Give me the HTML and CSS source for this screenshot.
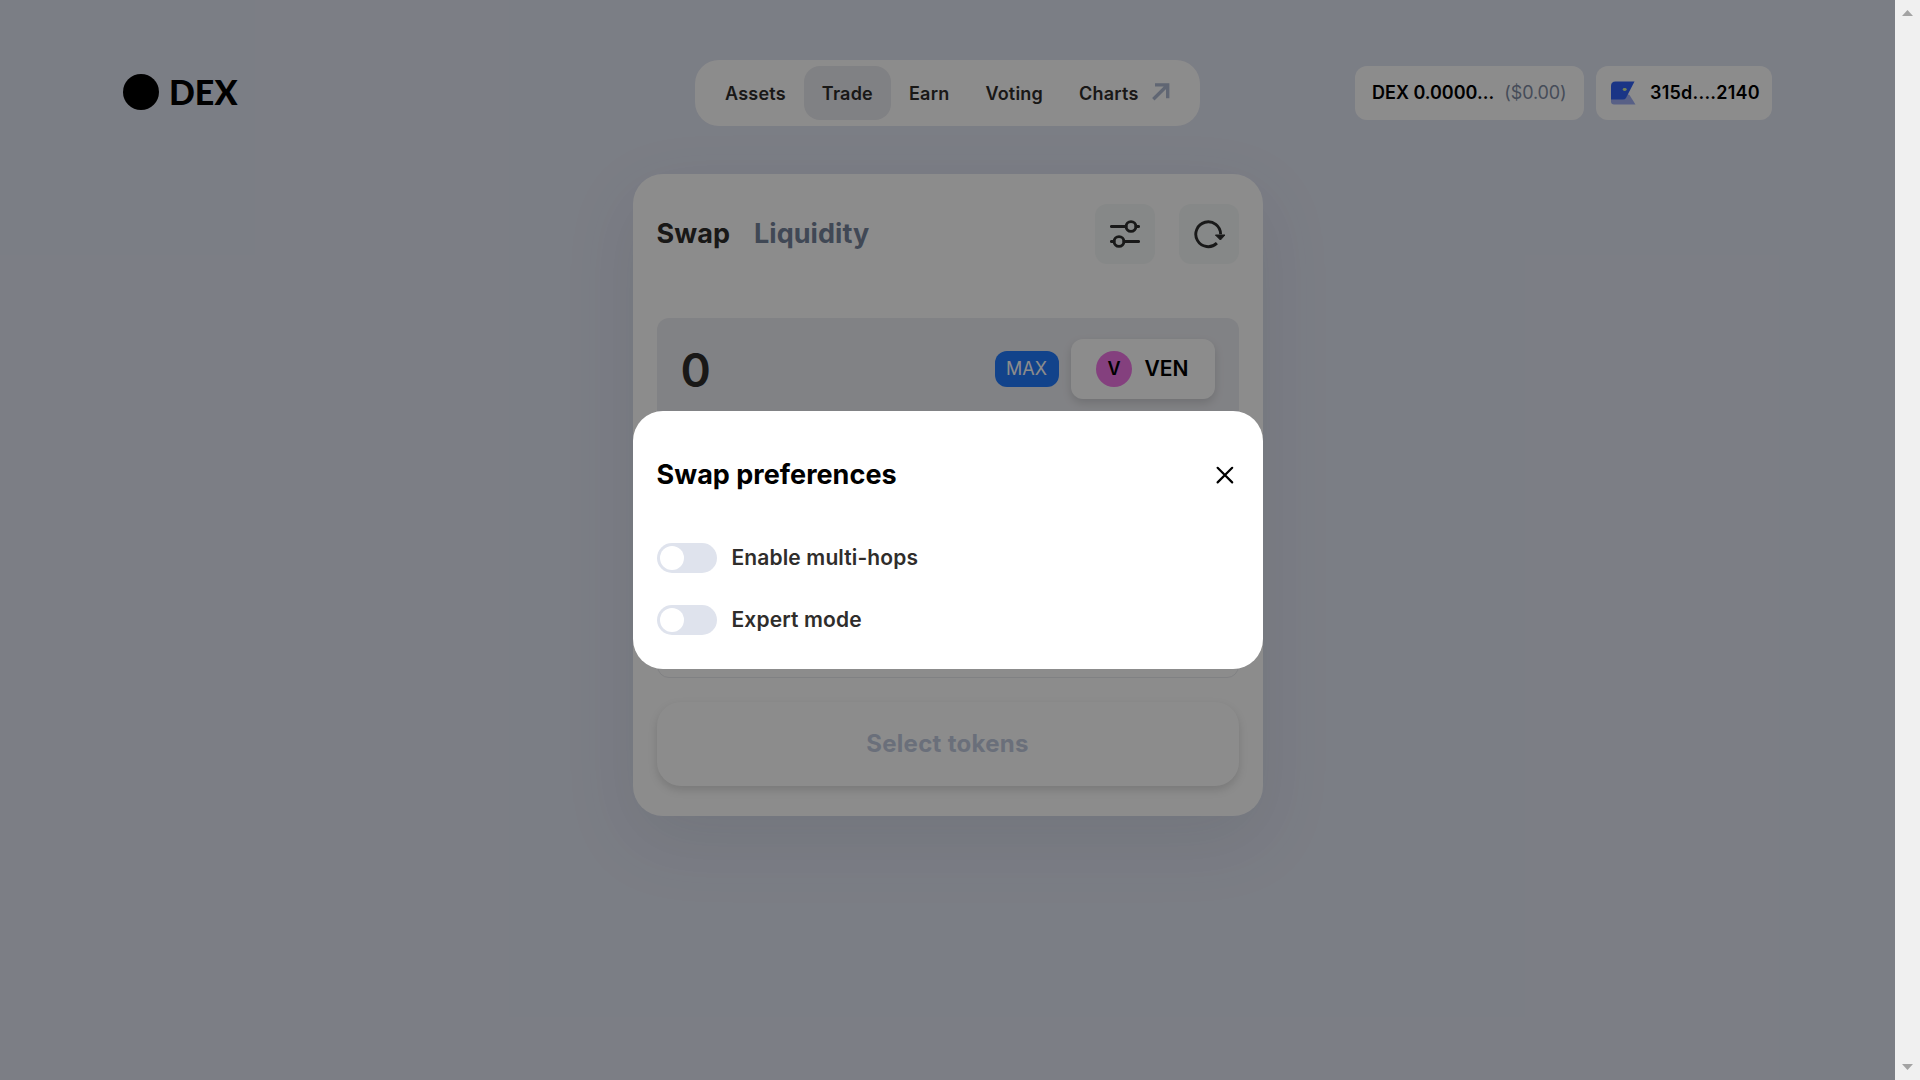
FILE: index.html
```html
<!DOCTYPE html>
<html lang="en">
<head>
<meta charset="utf-8">
<title>DEX</title>
<link rel="stylesheet" href="styles.css">
</head>
<body>
<div class="page">
  <header class="header">
    <div class="brand"><span class="brand-dot"></span><span class="brand-name">DEX</span></div>
    <nav class="nav">
      <a class="nav-item">Assets</a>
      <a class="nav-item active">Trade</a>
      <a class="nav-item">Earn</a>
      <a class="nav-item">Voting</a>
      <a class="nav-item">Charts
        <svg class="nav-arrow" width="18" height="18" viewBox="0 0 18 18" fill="none" stroke="#afbbd2" stroke-width="3.4"><path d="M3 1.9H15.7V15.2M15.2 2.5L1.3 16.2"/></svg>
      </a>
    </nav>
    <div class="account">
      <div class="chip balance"><span>DEX 0.0000...</span><span class="usd">($0.00)</span></div>
      <div class="chip wallet">
        <svg width="26" height="24" viewBox="0 0 26 24"><path d="M1 7V20.5Q1 23.5 4 23.5H25.5L19.5 14Z" fill="#a0b0f5"/><path d="M5.5.5H24.5L16 17Q15 18.5 13 18.5H1V5Q1 .5 5.5.5Z" fill="#3162f5"/><ellipse cx="14.7" cy="8.5" rx="2" ry="1.4" fill="#d8ef9c"/></svg>
        <span>315d....2140</span>
      </div>
    </div>
  </header>
  <main class="card">
    <div class="card-head">
      <div class="tabs"><span class="tab">Swap</span><span class="tab muted">Liquidity</span></div>
      <div class="tools">
        <button class="tool"><svg width="30" height="30" viewBox="0 0 30 30" fill="none" stroke="#2f2f2f" stroke-width="2.9" stroke-linecap="round"><path d="M1.4 7.5H16M26 7.5H28.6M1.4 22.5H4M14 22.5H28.6"/><circle cx="21" cy="7.5" r="4.9"/><circle cx="9" cy="22.5" r="4.9"/></svg></button>
        <button class="tool"><svg width="32" height="30" viewBox="0 0 32 30" fill="none" stroke="#2f2f2f" stroke-width="2.9"><path d="M23.9 24.1A12.4 12.4 0 1 1 27.6 15.3"/><path d="M22.4 16H32L27.4 21Z" fill="#2f2f2f" stroke-width="1" stroke-linejoin="round"/></svg></button>
      </div>
    </div>
    <section class="amount">
      <span class="amount-value">0</span>
      <button class="max">MAX</button>
      <button class="token"><span class="token-logo">V</span>VEN</button>
    </section>
    <section class="receive"></section>
    <button class="submit">Select tokens</button>
  </main>
</div>
<div class="overlay">
  <div class="dialog">
    <div class="dialog-head">
      <h2 class="dialog-title">Swap preferences</h2>
      <svg class="close" width="18" height="18" viewBox="0 0 18 18" stroke="#000" stroke-width="2.2" stroke-linecap="round"><path d="M1.6 1.8L16.2 16.4M16.2 1.8L1.6 16.4"/></svg>
    </div>
    <label class="option"><span class="switch"><span class="knob"></span></span><span class="option-name">Enable multi-hops</span></label>
    <label class="option"><span class="switch"><span class="knob"></span></span><span class="option-name">Expert mode</span></label>
  </div>
</div>
<div class="scrollbar">
  <svg width="11" height="6" viewBox="0 0 11 6"><path d="M0 6L5.5 0L11 6Z" fill="#a3a3a3"/></svg>
  <svg width="11" height="6" viewBox="0 0 11 6"><path d="M0 0H11L5.5 6Z" fill="#a3a3a3"/></svg>
</div>
</body>
</html>
```
FILE: styles.css
```css
* { box-sizing: border-box; }
body { margin: 0; height: 1080px; overflow: hidden; display: flex; font-family: Inter, "Liberation Sans", sans-serif; color: #2f2d2b; background: #e1e5f2; }
button { border: 0; padding: 0; font: inherit; color: inherit; }
svg { display: block; flex: none; }

.page { width: 1895px; height: 1080px; display: flex; flex-direction: column; align-items: center; overflow: hidden; }
.header { width: 1649px; margin-top: 60px; height: 66px; display: grid; grid-template-columns: 1fr 505px 1fr; align-items: center; }
.brand { display: flex; align-items: center; gap: 10px; padding-bottom: 2px; }
.brand-dot { width: 36px; height: 36px; border-radius: 50%; background: #000; }
.brand-name { font: 900 34px/37px Lato, sans-serif; color: #000; padding-bottom: 1px; }
.nav { height: 66px; padding: 6px 12px; display: flex; background: #fff; border-radius: 24px; }
.nav-item { height: 54px; padding: 0 18px; display: flex; align-items: center; font-size: 18px; font-weight: 630; letter-spacing: .22px; border-radius: 16px; white-space: nowrap; }
.nav-item.active { background: #eaebf0; }
.nav-arrow { margin: -2px 0 0 13px; }
.account { display: flex; justify-content: flex-end; gap: 12px; }
.chip { height: 54px; display: flex; align-items: center; background: #fff; border-radius: 12px; font-size: 18px; font-weight: 600; color: #000; white-space: nowrap; padding-bottom: 1px; }
.balance { width: 229px; padding-left: 17px; gap: 10px; }
.usd { font-weight: 400; color: #7f8ba3; letter-spacing: -.1px; }
.wallet { width: 176px; padding-left: 14px; gap: 14px; letter-spacing: .22px; }

.card { width: 630px; height: 642px; margin-top: 48px; padding: 30px 24px; border-radius: 30px; background: #fff; display: flex; flex-direction: column; box-shadow: 0 24px 72px rgba(75, 85, 110, .11); }
.card-head { height: 60px; display: flex; align-items: center; justify-content: space-between; }
.tabs { display: flex; gap: 24px; font-size: 27px; font-weight: 690; letter-spacing: .05px; padding-bottom: 2px; }
.muted { color: #76839b; }
.tools { display: flex; gap: 24px; }
.tool { width: 60px; height: 60px; display: grid; place-items: center; border-radius: 12px; background: #f4f8f7; }
.amount { height: 150px; margin-top: 54px; padding: 21px 24px; display: flex; align-items: flex-start; background: #ecedf2; border-radius: 12px; }
.amount-value { flex: 1; font-size: 46px; line-height: 62px; font-weight: 560; }
.max { width: 64px; height: 36px; margin: 12px 12px 0 0; border-radius: 12px; background: #217afd; color: #fff; font-size: 18px; padding-bottom: 1px; }
.token { width: 144px; height: 60px; padding: 0 0 1px 25px; display: flex; align-items: center; gap: 13px; border-radius: 12px; background: #fff; color: #000; font-size: 21px; font-weight: 600; box-shadow: 0 4px 10px rgba(0, 0, 0, .14); }
.token-logo { width: 36px; height: 36px; border-radius: 50%; background: #f075e6; display: grid; place-items: center; font-size: 18px; font-weight: 630; padding-left: 1px; }
.receive { height: 150px; margin-top: 60px; border: 1px solid #eaebef; border-radius: 12px; }
.submit { height: 84px; margin-top: 24px; padding-bottom: 2px; border-radius: 24px; background: #fff; color: #c2cbdf; font-size: 24px; font-weight: 700; letter-spacing: .3px; box-shadow: 0 4px 10px rgba(0, 0, 0, .14); }

.overlay { position: absolute; inset: 0 25px 0 0; display: flex; align-items: center; justify-content: center; background: rgba(0, 0, 0, .45); }
.dialog { width: 630px; height: 258px; padding: 42px 24px 0; border-radius: 30px; background: #fff; }
.dialog-head { height: 44px; margin-bottom: 46px; display: flex; align-items: center; justify-content: space-between; }
.dialog-title { margin: 0; padding-bottom: 1px; font-size: 27px; font-weight: 690; letter-spacing: .03px; color: #000; }
.close { margin: 0 5px 0 0; }
.option { height: 30px; margin-bottom: 32px; display: flex; align-items: center; gap: 15px; font-size: 21px; font-weight: 630; letter-spacing: .13px; }
.option-name { padding-bottom: 1px; }
.switch { width: 60px; height: 30px; padding: 3px; border-radius: 15px; background: #dfe3ed; }
.knob { display: block; width: 24px; height: 24px; border-radius: 50%; background: #fff; }
.scrollbar { width: 25px; height: 1080px; padding: 10px 7px; display: flex; flex-direction: column; justify-content: space-between; background: #f0f0f0; }
```
